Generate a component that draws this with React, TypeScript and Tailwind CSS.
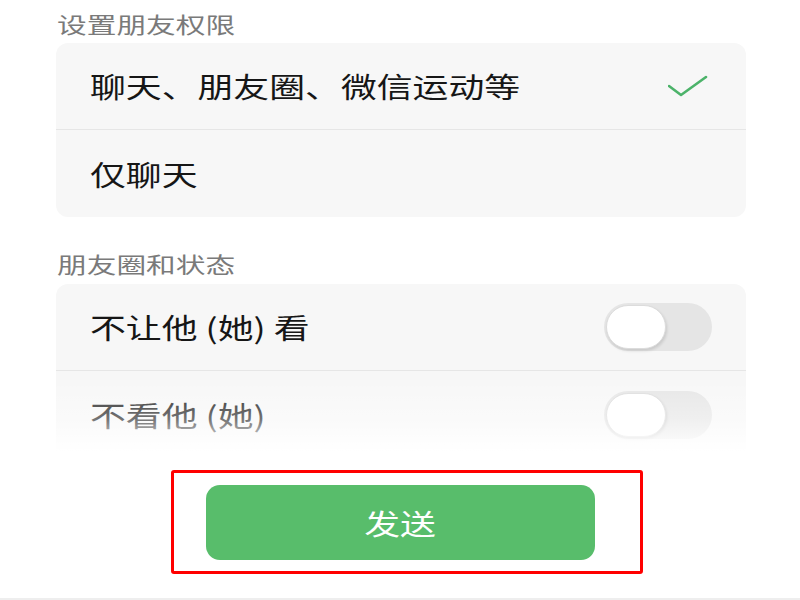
const cjk = "font-['Noto_Sans_CJK_SC','Noto_Sans',sans-serif]";

const Check = () => (
  <svg width="40" height="24" viewBox="0 0 40 24" fill="none">
    <polyline
      points="1,11 13,20 38,2"
      stroke="#4cb36a"
      strokeWidth="2.6"
      strokeLinecap="round"
      strokeLinejoin="round"
    />
  </svg>
);

const Toggle = () => (
  <div className="w-[108px] h-[48px] rounded-full bg-[#e5e5e5] flex items-center pl-[2px]">
    <div className="w-[60px] h-[44px] rounded-full bg-white border border-[#dcdcdc] shadow-[1px_2px_3px_rgba(0,0,0,0.12)]" />
  </div>
);

const SectionLabel = ({ text }: { text: string }) => (
  <div className={`${cjk} h-[30px] leading-[30px] pl-[1px] text-[22px] text-[#7a7a7a]`}>
    <span className="inline-block origin-left scale-x-[1.35]">{text}</span>
  </div>
);

const Row = ({
  label,
  right,
  divider,
}: {
  label: string;
  right?: React.ReactNode;
  divider?: boolean;
}) => (
  <div
    className={`h-[87px] flex items-center justify-between pl-[34px] pr-[34px] ${
      divider ? 'border-b border-[#e6e6e6]' : ''
    }`}
  >
    <span className={`${cjk} inline-block origin-left scale-x-[1.28] text-[28px] text-[#161616] whitespace-pre`}>
      {label}
    </span>
    {right}
  </div>
);

export default function App() {
  return (
    <div className="w-[800px] h-[600px] bg-white overflow-hidden flex flex-col">
      <div className="pl-[56px] pr-[54px] pt-[8px]">
        <SectionLabel text="设置朋友权限" />
        <div className="mt-[5px] rounded-[12px] bg-[#f7f7f7]">
          <Row
            label="聊天、朋友圈、微信运动等"
            divider
            right={
              <div className="pr-[4px] pt-[2px]">
                <Check />
              </div>
            }
          />
          <Row label="仅聊天" />
        </div>

        <div className="mt-[31px]">
          <SectionLabel text="朋友圈和状态" />
        </div>
        <div className="relative mt-[6px] h-[168px] rounded-t-[12px] bg-[#f7f7f7] overflow-hidden">
          <Row label="不让他 (她) 看" divider right={<Toggle />} />
          <Row label="不看他 (她)" right={<Toggle />} />
          <div className="absolute left-0 right-0 bottom-0 h-[66px] bg-gradient-to-b from-white/10 via-white/40 to-white" />
        </div>
      </div>

      <div className="flex-1 flex flex-col">
        <div className="mt-[18px] ml-[171px] w-[472px] h-[104px] border-[3px] border-[#f00] rounded-[3px] pl-[32px] pt-[12px]">
          <button
            className={`${cjk} w-[389px] h-[75px] rounded-[14px] bg-[#58bd6b] text-white text-[28px] flex items-center justify-center`}
          >
            <span className="inline-block scale-x-[1.28]">发送</span>
          </button>
        </div>
        <div className="mt-auto h-[2px] bg-[#eeeeee]" />
      </div>
    </div>
  );
}
